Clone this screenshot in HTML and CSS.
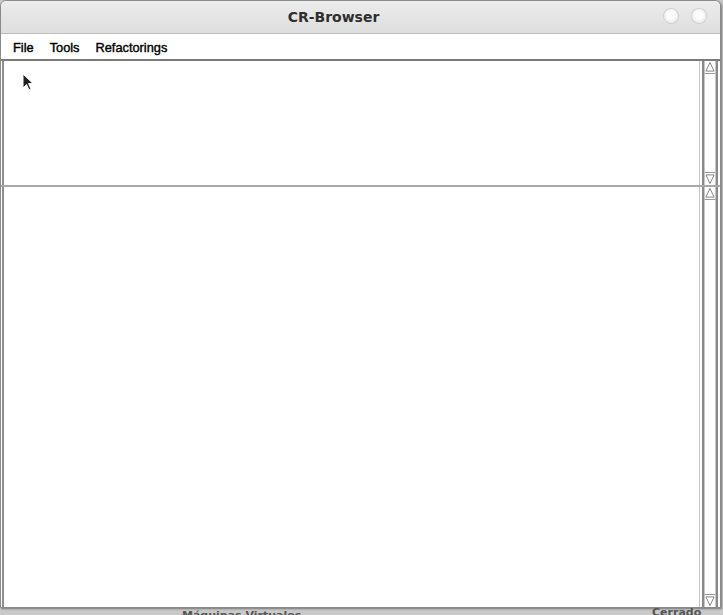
FILE: index.html
```html
<!DOCTYPE html>
<html>
<head>
<meta charset="utf-8">
<link rel="stylesheet" href="styles.css">
</head>
<body>
<div class="window">
  <div class="titlebar">
    <span class="title">CR-Browser</span>
    <div class="buttons"><span class="btn"></span><span class="btn"></span></div>
  </div>
  <div class="menubar">
    <span class="menu">File</span>
    <span class="menu">Tools</span>
    <span class="menu">Refactorings</span>
  </div>
  <div class="panes">
    <div class="pane top">
      <div class="content"></div>
      <div class="scroll">
        <span class="arrow up"><svg width="11" height="12" viewBox="0 0 11 12"><path d="M5.5 1 L10 10.5 L1 10.5 Z" fill="none" stroke="#7a7a7a" stroke-width="1"/></svg></span>
        <span class="track"></span>
        <span class="arrow down"><svg width="11" height="12" viewBox="0 0 11 12"><path d="M1 1.5 L10 1.5 L5.5 11 Z" fill="none" stroke="#7a7a7a" stroke-width="1"/></svg></span>
      </div>
    </div>
    <div class="pane bottom">
      <div class="content"></div>
      <div class="scroll">
        <span class="arrow up"><svg width="11" height="12" viewBox="0 0 11 12"><path d="M5.5 1 L10 10.5 L1 10.5 Z" fill="none" stroke="#7a7a7a" stroke-width="1"/></svg></span>
        <span class="track"></span>
        <span class="arrow down"><svg width="11" height="12" viewBox="0 0 11 12"><path d="M1 1.5 L10 1.5 L5.5 11 Z" fill="none" stroke="#7a7a7a" stroke-width="1"/></svg></span>
      </div>
    </div>
  </div>
  <svg class="cursor" width="14" height="20" viewBox="0 0 14 20"><path d="M1 1 L1 15 L4.5 11.5 L7 17 L9 16 L6.5 10.5 L11 10.5 Z" fill="#222" stroke="#fff" stroke-width="1"/></svg>
</div>
<div class="desk"><span class="dt1">Máquinas Virtuales</span><span class="dt2">Cerrado res</span></div>
</body>
</html>
```
FILE: styles.css
```css
html, body { margin: 0; padding: 0; }
body {
  width: 723px; height: 615px; overflow: hidden;
  background: #c9c9c9;
  font-family: "DejaVu Sans", "Liberation Sans", sans-serif;
  position: relative;
}
.window {
  position: relative;
  width: 719px; height: 606px;
  border: 1px solid #8a8a8a;
  border-radius: 6px 6px 0 0;
  background: #ffffff;
  display: flex; flex-direction: column;
  box-shadow: 1px 1px 2px rgba(0,0,0,0.4);
}
.titlebar {
  height: 32px; flex: none;
  background: linear-gradient(#ececec, #dedede);
  border-bottom: 1px solid #bdbdbd;
  border-radius: 6px 6px 0 0;
  display: flex; align-items: center; justify-content: center;
  position: relative;
}
.title { font-weight: bold; font-size: 14px; color: #2e2e2e; margin-left: -54px; }
.buttons { position: absolute; right: 14px; top: 8px; display: flex; gap: 14px; }
.btn {
  width: 14px; height: 14px; border-radius: 50%;
  background: radial-gradient(circle at 50% 45%, #fbfbfb 40%, #dadada 100%);
  box-shadow: 0 0 0 1px #d0d0d0;
}
.menubar {
  height: 27px; flex: none; background: #fff;
  display: flex; align-items: center; padding: 2px 0 0 12px; gap: 16px; box-sizing: border-box;
  border-bottom: 2px solid #7c7c7c;
}
.menu { font-size: 12.8px; color: #000; font-family: "Liberation Sans", sans-serif; font-weight: normal; -webkit-text-stroke: 0.4px #000; }
.panes { flex: 1; display: flex; flex-direction: column; }
.pane { display: flex; }
.pane.top { height: 124px; border-bottom: 2px solid #a8a8a8; }
.pane.bottom { flex: 1; }
.content { flex: 1; border-left: 2px solid #8e8e8e; margin-left: 1px; background: #fff; border-right: 1px solid #c8c8c8; }
.scroll {
  width: 12px; margin: 0 2px 0 2px;
  border-left: 2px solid #8a8a8a; border-right: 2px solid #8a8a8a;
  background: #fff;
  display: flex; flex-direction: column;
}
.track { flex: 1; border-left: 1px solid #c8c8c8; border-right: 1px solid #c8c8c8; }
.arrow { height: 12px; flex: none; display: flex; justify-content: center; align-items: center; border-left: 1px solid #c8c8c8; border-right: 1px solid #c8c8c8; }
.arrow svg { display: block; }
.arrow.up { border-bottom: 1px solid #9a9a9a; }
.arrow.down { border-top: 1px solid #9a9a9a; }
.cursor { position: absolute; left: 21px; top: 72px; }
.desk { height: 8px; position: relative; font-size: 11px; color: #555; font-weight: bold; }
.dt1 { position: absolute; left: 182px; top: 1px; }
.dt2 { position: absolute; left: 652px; top: -2px; }
```
